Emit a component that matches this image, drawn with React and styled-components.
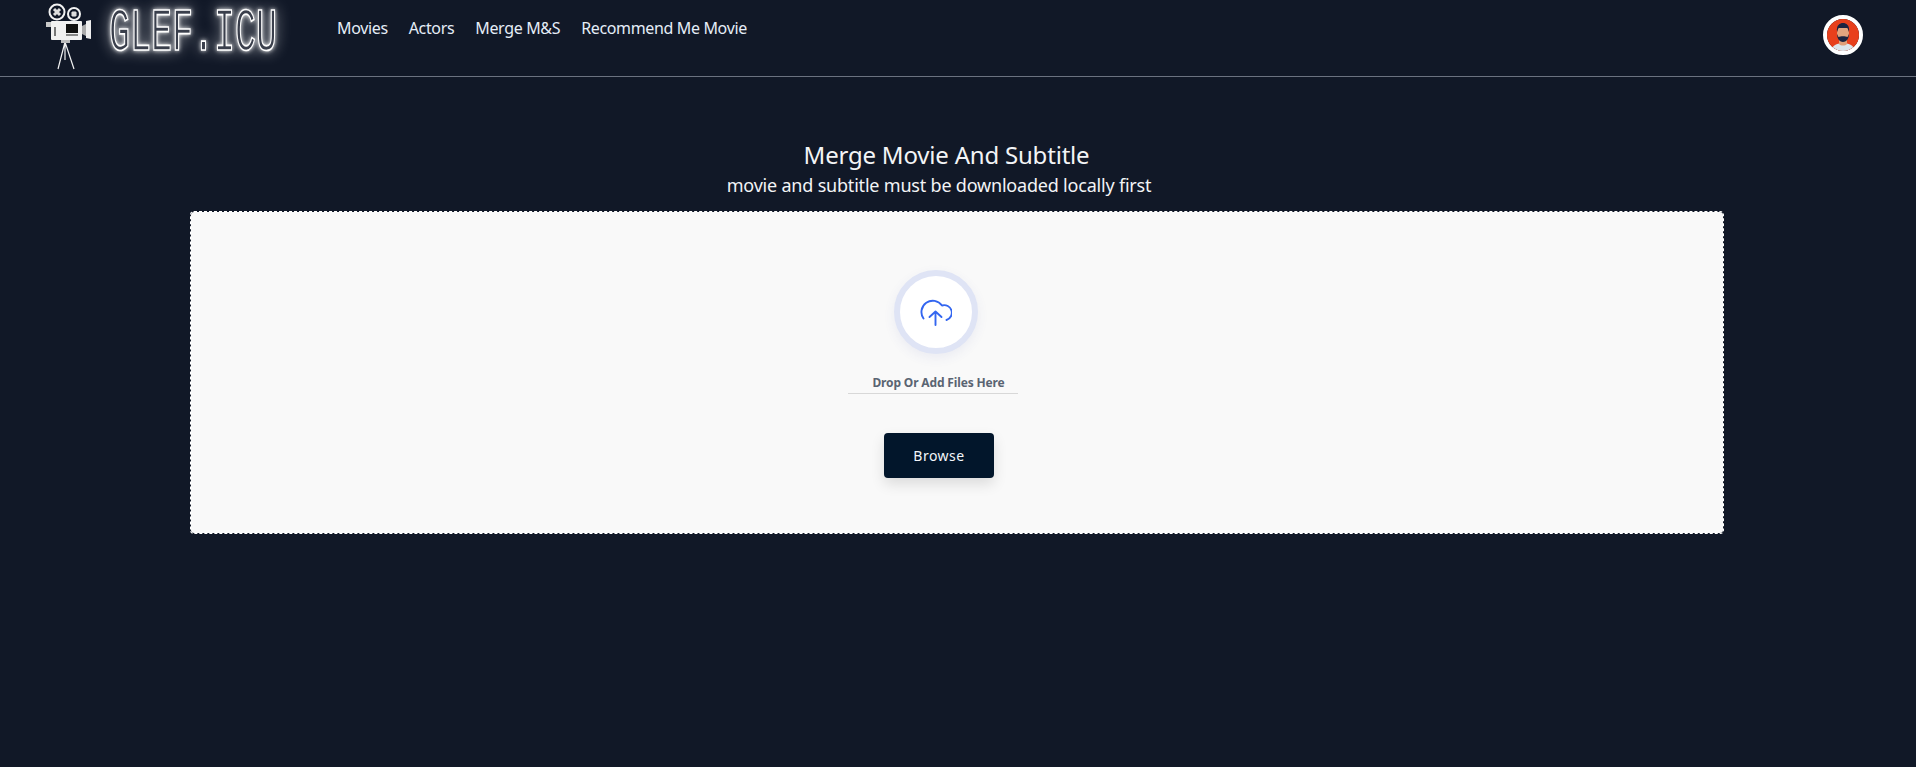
import React from "react"
import styled, { createGlobalStyle } from "styled-components"

const GlobalStyle = createGlobalStyle`
html, body {
  margin: 0;
  background: #111827;
  font-family: "Noto Sans", "Open Sans", sans-serif;
}
`

const Page = styled.div`
min-height: 767px;
background: #111827;
overflow: hidden;
`

const Nav = styled.nav`
height: 76px;
border-bottom: 1px solid #6b7280;
display: flex;
padding: 0 50px 0 44px;
`

const LogoLink = styled.a`
display: flex;
align-items: flex-start;
width: 293px;
flex-shrink: 0;
`

const NavLinks = styled.div`
display: flex;
gap: 21px;
padding-top: 16px;
flex: 1;
`

const NavLink = styled.a`
color: #e5edf7;
font-size: 16px;
line-height: 24px;
letter-spacing: -0.35px;
`

const Avatar = styled.div`
width: 40px;
height: 40px;
margin-top: 15px;
margin-right: 3px;
border-radius: 50%;
border: 4px solid #fff;
box-sizing: border-box;
overflow: hidden;
`

const Main = styled.main`
padding-top: 62px;
`

const Heading = styled.h1`
margin: 0;
padding-right: ${(p) => p.$shift}px;
text-align: center;
color: #f3f4f6;
font-size: 24px;
line-height: 32px;
font-weight: 400;
letter-spacing: -0.2px;
`

const SubHeading = styled(Heading)`
font-size: 18px;
line-height: 28px;
margin-bottom: 12px;
`

const DropZone = styled.div`
width: 1534px;
height: 323px;
box-sizing: border-box;
margin-left: 190px;
padding-top: 58px;
border: 1px dashed #fff;
border-radius: 4px;
background: #f9f9f9;
background-clip: padding-box;
display: flex;
flex-direction: column;
align-items: center;
`

const UploadRing = styled.div`
width: 84px;
height: 84px;
box-sizing: border-box;
margin-right: 42px;
border: 6px solid #dfe4f5;
border-radius: 50%;
background: #fff;
display: flex;
align-items: center;
justify-content: center;
box-shadow: 0 4px 12px rgba(60, 80, 160, 0.08);
`

const DropLabel = styled.div`
width: 170px;
box-sizing: border-box;
margin-top: 20px;
margin-right: 48px;
padding: 0 0 2px 11px;
border-bottom: 1px solid #d8d8d8;
text-align: center;
color: #5a6472;
font-size: 12px;
line-height: 17px;
font-weight: 700;
letter-spacing: -0.15px;
white-space: nowrap;
`

const BrowseButton = styled.button`
width: 110px;
height: 45px;
margin-top: 39px;
margin-right: 36px;
border: 0;
border-radius: 4px;
background: #02162b;
color: #f3f6fa;
font-family: inherit;
font-size: 14px;
letter-spacing: 0.5px;
box-shadow: 0 6px 14px rgba(0, 0, 0, 0.12);
`

const Glow = styled.svg`
display: block;
margin-left: 1px;
flex-shrink: 0;
overflow: visible;
filter: drop-shadow(0 0 2px rgba(255, 255, 255, 0.95)) drop-shadow(0 0 7px rgba(255, 255, 255, 0.5));
`

const CameraLogo = () => (
  <svg width="64" height="72" viewBox="0 0 64 72" style={{ display: "block", flexShrink: 0 }}>
    <g fill="none" stroke="#f2f2f2">
      <circle cx="13" cy="12" r="7.5" strokeWidth="2" />
      <circle cx="30" cy="14" r="6" strokeWidth="2" />
      <path d="M10 9l6 6M16 9l-6 6M28 12l4 4M32 12l-4 4" strokeWidth="3" stroke="#ddd" />
      <path d="M21 42l-7 27M21 42l9 27M21 42v18" strokeWidth="1.2" />
    </g>
    <rect x="2" y="22" width="5" height="5" fill="#c9c9c9" />
    <rect x="7" y="21" width="31" height="19" rx="1" fill="#f1f1f1" />
    <rect x="22" y="24" width="12" height="9" fill="#111" />
    <rect x="10" y="27" width="2" height="9" fill="#777" />
    <rect x="22" y="34" width="12" height="2" fill="#888" />
    <path d="M38 26l4-2v12l-4-2z" fill="#aaa" />
    <path d="M42 21l5-1v19l-5-1z" fill="#eee" />
    <rect x="17" y="40" width="9" height="3" fill="#bbb" />
  </svg>
)

const Wordmark = () => (
  <Glow width="170" height="56" viewBox="0 0 170 56">
    <g transform="translate(0 50) scale(1 1.72)">
      <text
        x="0"
        y="0"
        fontFamily="'Liberation Mono', monospace"
        fontSize="35"
        fill="#3a3f4c"
        stroke="#fff"
        strokeWidth="1.4"
        vectorEffect="non-scaling-stroke"
      >
        GLEF.ICU
      </text>
    </g>
  </Glow>
)

const Face = () => (
  <svg width="32" height="32" viewBox="0 0 32 32" style={{ display: "block" }}>
    <rect width="32" height="32" fill="#e8401c" />
    <path d="M4 32c1-6 7-8 12-8s11 2 12 8z" fill="#dce6ec" />
    <path d="M12 20h8v5c-2 2-6 2-8 0z" fill="#e0a07a" />
    <ellipse cx="16" cy="14" rx="6" ry="7.500" fill="#e2a57f" />
    <path d="M10 13c-1-7 3-9 6-9s7 2 6 9l-1.500-4h-9z" fill="#1c2440" />
    <path d="M10 15c0 5 3 8 6 8s6-3 6-8l-1.500 3c-2-1-7-1-9 0z" fill="#1c2440" />
  </svg>
)

const CloudIcon = () => (
  <svg width="32" height="27" viewBox="0 0 32 27" fill="none" stroke="#3366f0" strokeWidth="1.9" strokeLinecap="round" strokeLinejoin="round">
    <path d="M3.500 19.500A11 11 0 0 1 22 6.500A7 7 0 0 1 26.500 21" />
    <path d="M15.500 26V12.500M9.500 18l6-5.500 6 5.500" />
  </svg>
)

const App = () => {
  return (
    <Page>
      <GlobalStyle />
      <Nav>
        <LogoLink>
          <CameraLogo />
          <Wordmark />
        </LogoLink>
        <NavLinks>
          <NavLink>Movies</NavLink>
          <NavLink>Actors</NavLink>
          <NavLink>Merge M&amp;S</NavLink>
          <NavLink>Recommend Me Movie</NavLink>
        </NavLinks>
        <Avatar>
          <Face />
        </Avatar>
      </Nav>
      <Main>
        <Heading $shift={23}>Merge Movie And Subtitle</Heading>
        <SubHeading as="h2" $shift={38}>movie and subtitle must be downloaded locally first</SubHeading>
        <DropZone>
          <UploadRing>
            <CloudIcon />
          </UploadRing>
          <DropLabel>Drop Or Add Files Here</DropLabel>
          <BrowseButton>Browse</BrowseButton>
        </DropZone>
      </Main>
    </Page>
  )
}

export default App
